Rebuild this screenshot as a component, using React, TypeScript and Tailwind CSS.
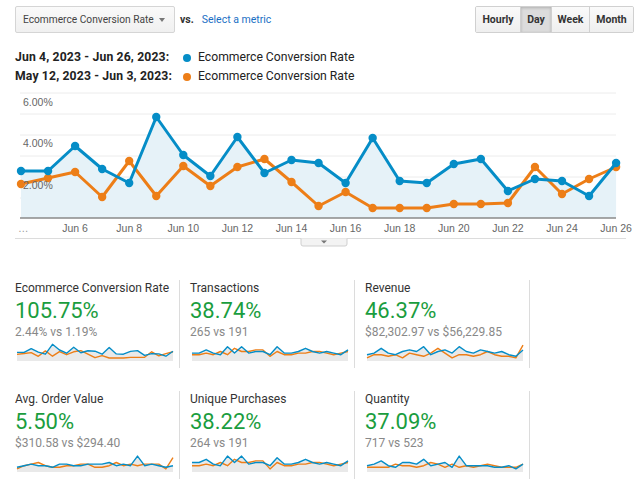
import React from "react";

const BLUE = "#058dc7";
const ORANGE = "#ed7e17";

const blueY = [170, 170, 145, 168, 182, 116, 154, 175, 136, 172, 159, 162, 182, 137, 180, 182, 163, 158, 190, 178, 180, 195, 162];
const orangeY = [183, 177, 171, 196, 160, 195, 165, 185, 166, 158, 181, 205, 191, 207, 207, 207, 203, 203, 202, 166, 193, 178, 166];
const xs = blueY.map((_, i) => 21 + i * 27.05);

const pts = (ys: number[]) => ys.map((y, i) => `${xs[i].toFixed(1)},${y}`).join(" ");

const grid = [92, 113, 134, 155, 176, 197];
const xLabels = [
  { d: "Jun 6", i: 2 },
  { d: "Jun 8", i: 4 },
  { d: "Jun 10", i: 6 },
  { d: "Jun 12", i: 8 },
  { d: "Jun 14", i: 10 },
  { d: "Jun 16", i: 12 },
  { d: "Jun 18", i: 14 },
  { d: "Jun 20", i: 16 },
  { d: "Jun 22", i: 18 },
  { d: "Jun 24", i: 20 },
  { d: "Jun 26", i: 22 },
];

function MainChart() {
  const fill = `21,217 ${pts(blueY)} ${xs[22].toFixed(1)},217`;
  return (
    <svg width="640" height="160" viewBox="0 88 640 160" className="block">
      {grid.map((y) => (
        <line key={y} x1="20" x2="616" y1={y} y2={y} stroke="#ececec" strokeWidth="1" />
      ))}
      <polygon points={fill} fill="#e6f2f8" />
      <line x1="20" x2="616" y1="217" y2="217" stroke="#8a8a8a" strokeWidth="1.5" />
      <polyline points={pts(orangeY)} fill="none" stroke={ORANGE} strokeWidth="3" strokeLinejoin="round" />
      {orangeY.map((y, i) => (
        <circle key={i} cx={xs[i]} cy={y} r="4.2" fill={ORANGE} />
      ))}
      <polyline points={pts(blueY)} fill="none" stroke={BLUE} strokeWidth="3" strokeLinejoin="round" />
      {blueY.map((y, i) => (
        <circle key={i} cx={xs[i]} cy={y} r="4.2" fill={BLUE} />
      ))}
      <g fontFamily="'Liberation Sans', Arial, sans-serif" fontSize="10.5" fill="#666">
        <text x="23" y="105">6.00%</text>
        <text x="23" y="146">4.00%</text>
        <text x="23" y="188">2.00%</text>
        <text x="18" y="231" fill="#999">…</text>
        {xLabels.map((l) => (
          <text key={l.d} x={xs[l.i]} y="231" textAnchor="middle">
            {l.d}
          </text>
        ))}
      </g>
      <line x1="15" x2="626" y1="237.5" y2="237.5" stroke="#dcdcdc" strokeWidth="1" />
      <path d="M301 237.5 V243 Q301 245 303 245 H345 Q347 245 347 243 V237.5" fill="#f3f3f3" stroke="#cfcfcf" strokeWidth="1" />
      <path d="M321 239.5 H327 L324 242.5 Z" fill="#777" />
    </svg>
  );
}

type SparkData = { blue: number[]; orange: number[] };

function Spark({ blue, orange }: SparkData) {
  const w = 156;
  const step = w / (blue.length - 1);
  const y = (v: number) => 16.5 - v * 1.6;
  const line = (a: number[]) => a.map((v, i) => `${(i * step).toFixed(1)},${y(v).toFixed(1)}`).join(" ");
  const area = `0,18 ${line(blue)} ${w},18`;
  return (
    <svg width={w} height="18" className="block overflow-visible">
      <polygon points={area} fill="#e9e9e9" />
      <polyline points={line(orange)} fill="none" stroke={ORANGE} strokeWidth="1.4" strokeLinejoin="round" />
      <polyline points={line(blue)} fill="none" stroke={BLUE} strokeWidth="1.4" strokeLinejoin="round" />
    </svg>
  );
}

const toV = (ys: number[]) => ys.map((y) => ((217 - y) / (217 - 116)) * 9.5);

const metrics = [
  {
    title: "Ecommerce Conversion Rate",
    value: "105.75%",
    sub: "2.44% vs 1.19%",
    spark: { blue: toV(blueY), orange: toV(orangeY) },
  },
  {
    title: "Transactions",
    value: "38.74%",
    sub: "265 vs 191",
    spark: {
      blue: [4, 4, 6, 4, 3, 8, 4, 8, 4, 5, 5, 3, 8, 4, 4, 5, 7, 5, 4, 5, 4, 3, 6],
      orange: [3, 3, 4, 3, 5, 3, 7, 5, 5, 6, 6, 2, 5, 3, 3, 4, 4, 5, 5, 4, 3, 4, 5],
    },
  },
  {
    title: "Revenue",
    value: "46.37%",
    sub: "$82,302.97 vs $56,229.85",
    spark: {
      blue: [3, 4, 7, 4, 3, 5, 6, 5, 8, 3, 5, 6, 4, 8, 5, 4, 6, 5, 4, 5, 3, 2, 6],
      orange: [1, 3, 3, 2, 3, 1, 4, 3, 2, 4, 7, 4, 1, 3, 3, 2, 3, 5, 3, 2, 2, 1, 9],
    },
  },
  {
    title: "Avg. Order Value",
    value: "5.50%",
    sub: "$310.58 vs $294.40",
    spark: {
      blue: [2, 3, 4, 3, 3, 2, 4, 4, 3, 3, 4, 4, 4, 5, 3, 4, 3, 9, 3, 4, 3, 2, 3],
      orange: [1, 3, 4, 5, 3, 2, 2, 3, 3, 4, 4, 2, 2, 3, 5, 3, 4, 3, 4, 4, 4, 1, 8],
    },
  },
  {
    title: "Unique Purchases",
    value: "38.22%",
    sub: "264 vs 191",
    spark: {
      blue: [5, 5, 7, 4, 3, 9, 5, 9, 4, 5, 5, 3, 8, 4, 4, 5, 7, 5, 4, 5, 4, 3, 6],
      orange: [3, 3, 4, 3, 5, 3, 7, 5, 5, 6, 6, 1, 5, 3, 3, 4, 4, 5, 5, 4, 3, 4, 5],
    },
  },
  {
    title: "Quantity",
    value: "37.09%",
    sub: "717 vs 523",
    spark: {
      blue: [3, 4, 6, 3, 2, 5, 5, 4, 7, 3, 4, 5, 2, 9, 3, 3, 3, 3, 2, 2, 3, 1, 4],
      orange: [2, 2, 2, 2, 4, 3, 3, 2, 3, 5, 4, 2, 4, 2, 3, 2, 3, 4, 3, 2, 2, 2, 4],
    },
  },
];

function MetricCell({ m }: { m: (typeof metrics)[number] }) {
  return (
    <div className="w-[175px] h-[88px] pl-[10px] border-r border-[#dcdcdc]">
      <div className="text-[12px] leading-[16px] text-[#333]">{m.title}</div>
      <div className="mt-[2px] text-[22px] leading-[26px] text-[#1a9d3e]">{m.value}</div>
      <div className="text-[12px] leading-[16px] text-[#888]">{m.sub}</div>
      <div className="mt-[3px] ml-[2px]">
        <Spark {...m.spark} />
      </div>
    </div>
  );
}

export default function App() {
  return (
    <div className="w-[640px] h-[483px] bg-white overflow-hidden font-['Roboto',sans-serif]">
      <div className="flex items-center justify-between pl-[15px] pr-[6px] pt-[6px]">
        <div className="flex items-center">
          <div className="flex h-[27px] w-[160px] items-center justify-between rounded-[2px] border border-[#d5d5d5] bg-gradient-to-b from-[#fafafa] to-[#f0f0f0] pl-[7px] pr-[9px] text-[10.2px] text-[#444]">
            <span>Ecommerce Conversion Rate</span>
            <span className="h-0 w-0 border-x-[3px] border-t-[4px] border-x-transparent border-t-[#777]" />
          </div>
          <span className="ml-[5px] text-[10.5px] font-bold text-[#333]">vs.</span>
          <span className="ml-[8px] text-[10.5px] text-[#1a6fc4]">Select a metric</span>
        </div>
        <div className="flex h-[27px] overflow-hidden rounded-[2px] border border-[#d0d0d0] text-[10.5px] font-bold text-[#333]">
          <div className="flex w-[44px] items-center justify-center bg-gradient-to-b from-[#fafafa] to-[#efefef]">Hourly</div>
          <div className="flex w-[31px] items-center justify-center border-l border-[#d0d0d0] bg-[#dcdcdc] shadow-[inset_0_1px_3px_rgba(0,0,0,0.2)]">Day</div>
          <div className="flex w-[38px] items-center justify-center border-l border-[#d0d0d0] bg-gradient-to-b from-[#fafafa] to-[#efefef]">Week</div>
          <div className="flex w-[44px] items-center justify-center border-l border-[#d0d0d0] bg-gradient-to-b from-[#fafafa] to-[#efefef]">Month</div>
        </div>
      </div>

      <div className="mt-[15px] pl-[15px] text-[12.2px] leading-[19px] text-[#222]">
        {[
          { d: "Jun 4, 2023 - Jun 26, 2023:", c: "bg-[#058dc7]" },
          { d: "May 12, 2023 - Jun 3, 2023:", c: "bg-[#ed7e17]" },
        ].map((r) => (
          <div key={r.d} className="flex items-center">
            <span className="w-[168px] font-bold tracking-[0.15px]">{r.d}</span>
            <span className={`h-[8px] w-[8px] rounded-full ${r.c}`} />
            <span className="ml-[7px]">Ecommerce Conversion Rate</span>
          </div>
        ))}
      </div>

      <div className="mt-[3px]">
        <MainChart />
      </div>

      <div className="mt-[31px] ml-[5px] flex flex-col gap-[23px]">
        <div className="flex">
          {metrics.slice(0, 3).map((m) => (
            <MetricCell key={m.title} m={m} />
          ))}
        </div>
        <div className="flex">
          {metrics.slice(3).map((m) => (
            <MetricCell key={m.title} m={m} />
          ))}
        </div>
      </div>
    </div>
  );
}
